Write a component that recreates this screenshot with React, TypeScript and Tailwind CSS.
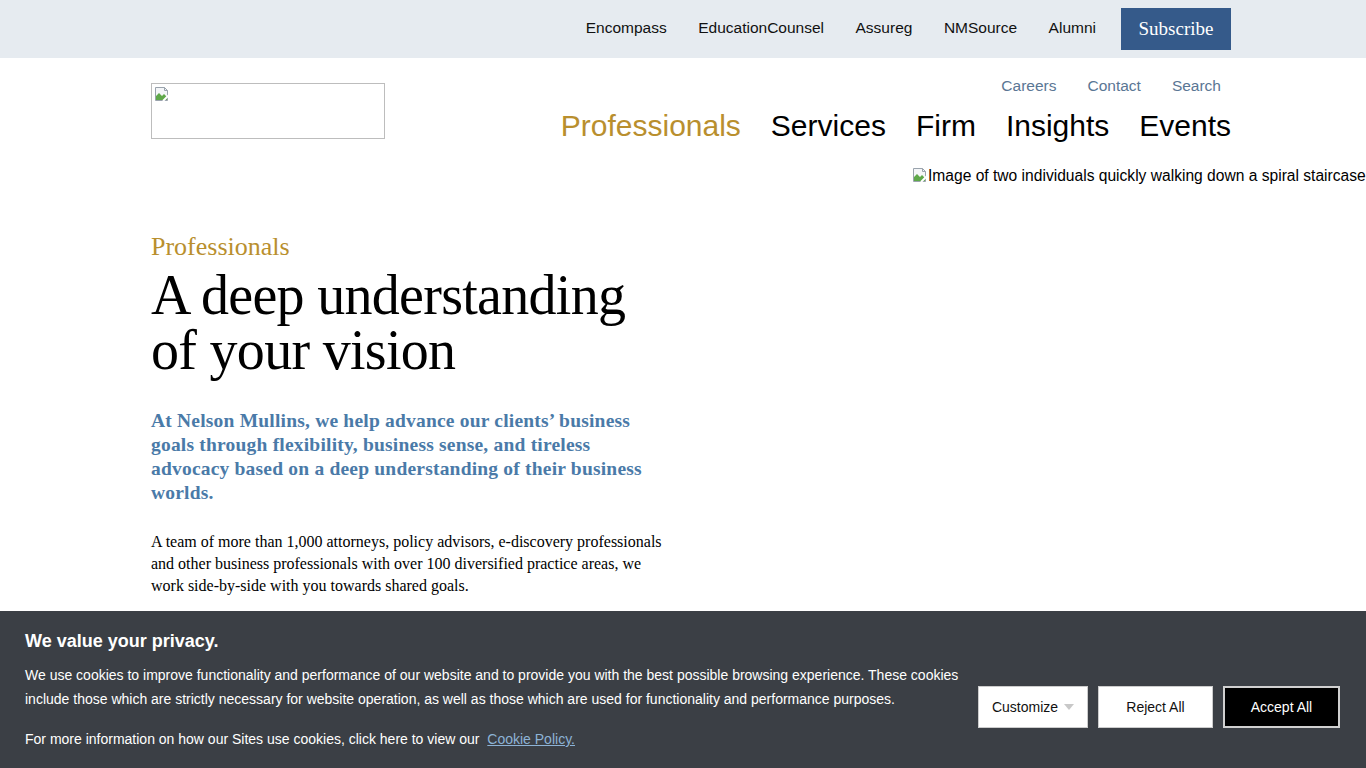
import { useState } from "react";

const UTILITY = ["Encompass", "EducationCounsel", "Assureg", "NMSource", "Alumni"];
const SECONDARY = ["Careers", "Contact", "Search"];
const PRIMARY = ["Professionals", "Services", "Firm", "Insights", "Events"];

const sans = "font-['Liberation_Sans',Arial,sans-serif]";
const serif = "font-['Liberation_Serif','Times_New_Roman',serif]";

function BrokenImage() {
  return (
    <svg width="16" height="16" viewBox="0 0 16 16" className="shrink-0">
      <path d="M1.5 1.5h9l3 3v10h-12z" fill="#f4f6f8" stroke="#9aa3ad" />
      <path d="M2 10l3-3 3 3 2-2 3 3v3H2z" fill="#5fa84a" />
      <path d="M10.5 1.5v3h3" fill="none" stroke="#9aa3ad" />
      <path d="M9 15l6-6" stroke="#fff" strokeWidth="2" />
    </svg>
  );
}

export default function App() {
  const [active] = useState("Professionals");
  const [showBanner, setShowBanner] = useState(true);

  return (
    <div className={`min-h-screen bg-white ${sans}`}>
      {/* --- UTILITY BAR --- */}
      <div className="h-[58px] bg-[#e6ebf0]">
        <div className="ml-[151px] w-[1080px] h-full flex items-start justify-end pt-2">
          <nav className="flex items-center h-[42px] gap-[31.5px] text-[15.5px] text-[#111] mr-[25px]">
            {UTILITY.map(item => (
              <a key={item} href="#" className="leading-none -mt-[3px]">{item}</a>
            ))}
          </nav>
          <button className={`bg-[#355a8a] text-white w-[110px] h-[42px] text-[19px] ${serif}`}>
            Subscribe
          </button>
        </div>
      </div>

      {/* --- HEADER --- */}
      <header className="ml-[151px] w-[1080px] flex justify-between pt-[25px]">
        <div className="w-[234px] h-[56px] border border-[#bdbdbd] p-[2px]">
          <BrokenImage />
        </div>
        <div className="flex flex-col items-end -mt-[8px]">
          <div className="flex gap-[31px] text-[15.5px] text-[#5a7694] mr-[10px] leading-[22px]">
            {SECONDARY.map(item => (
              <a key={item} href="#">{item}</a>
            ))}
          </div>
          <nav className="flex gap-[30px] text-[30px] leading-[36px] mt-[11px]">
            {PRIMARY.map(item => (
              <a key={item} href="#" className={item === active ? "text-[#b98f2e]" : "text-black"}>
                {item}
              </a>
            ))}
          </nav>
        </div>
      </header>

      {/* --- HERO --- */}
      <div className="flex">
        <section className="ml-[151px] w-[512px] pt-[88px] shrink-0">
          <p className={`${serif} text-[26px] leading-[30px] text-[#b98f2e]`}>Professionals</p>
          <h1 className={`${serif} text-[56px] leading-[55px] tracking-[-0.7px] text-black mt-[6px]`}>
            A deep understanding<br />of your vision
          </h1>
          <p className={`${serif} font-bold text-[19.5px] leading-[24px] text-[#4a7aa8] mt-[31px] w-[500px] tracking-[0.2px]`}>
            At Nelson Mullins, we help advance our clients’ business goals through flexibility, business sense, and tireless advocacy based on a deep understanding of their business worlds.
          </p>
          <p className={`${serif} text-[16px] leading-[22px] text-black mt-[26px]`}>
            A team of more than 1,000 attorneys, policy advisors, e-discovery professionals and other business professionals with over 100 diversified practice areas, we work side-by-side with you towards shared goals.
          </p>
        </section>
        <div className="ml-[249px] mt-[23px] flex items-start whitespace-nowrap overflow-hidden text-[15.6px] leading-[18px] text-black">
          <BrokenImage />
          <span>Image of two individuals quickly walking down a spiral staircase</span>
        </div>
      </div>

      {/* --- COOKIE BANNER --- */}
      {showBanner && (
        <div className="fixed bottom-0 left-0 right-0 h-[157px] bg-[#3b3f45] text-white flex items-start justify-between pl-[25px] pr-[26px]">
          <div className="pt-[18px]">
            <h2 className="text-[18px] font-bold leading-[24px]">We value your privacy.</h2>
            <p className="text-[14px] leading-[24px] mt-[10px] w-[940px]">
              We use cookies to improve functionality and performance of our website and to provide you with the best possible browsing experience. These cookies include those which are strictly necessary for website operation, as well as those which are used for functionality and performance purposes.
            </p>
            <p className="text-[14px] leading-[24px] mt-[16px]">
              For more information on how our Sites use cookies, click here to view our{" "}
              <a href="#" className="ml-[4px] text-[#8db3d6] underline">Cookie Policy.</a>
            </p>
          </div>
          <div className="flex gap-[10px] mt-[75px]">
            <button className="w-[110px] h-[42px] bg-white text-[#111] text-[14px] border border-[#ccc] flex items-center justify-center gap-[6px]">
              Customize
              <svg width="10" height="6" viewBox="0 0 10 6"><path d="M0 0h10L5 6z" fill="#c8c8c8" /></svg>
            </button>
            <button className="w-[115px] h-[42px] bg-white text-[#111] text-[14px] border border-[#ccc]">
              Reject All
            </button>
            <button onClick={() => setShowBanner(false)} className="w-[117px] h-[42px] bg-black text-white text-[14px] border-2 border-[#d0d0d0]">
              Accept All
            </button>
          </div>
        </div>
      )}
    </div>
  );
}
